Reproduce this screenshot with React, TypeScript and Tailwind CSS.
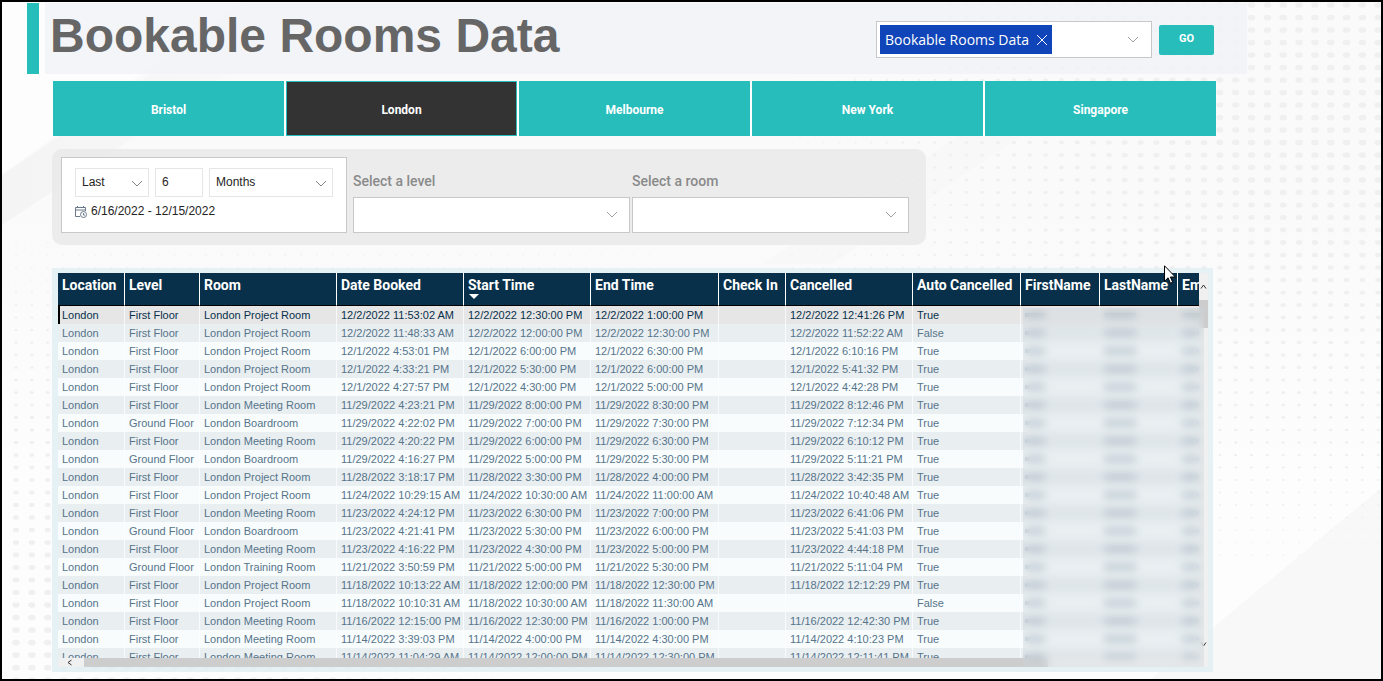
import clsx from "clsx";
import type { ReactNode } from "react";

const cities = ["Bristol", "London", "Melbourne", "New York", "Singapore"];

const columns = [
  { title: "Location", width: "w-[67px]" },
  { title: "Level", width: "w-[75px]" },
  { title: "Room", width: "w-[137px]" },
  { title: "Date Booked", width: "w-[127px]" },
  { title: "Start Time", width: "w-[127px]", sorted: true },
  { title: "End Time", width: "w-[128px]" },
  { title: "Check In", width: "w-[67px]" },
  { title: "Cancelled", width: "w-[127px]" },
  { title: "Auto Cancelled", width: "w-[108px]" },
  { title: "FirstName", width: "w-[79px]" },
  { title: "LastName", width: "w-[78px]" },
  { title: "Email", width: "w-[120px]" },
];

// level, room, booked, start, end, cancelled, auto cancelled
const bookings = [
  ["First Floor", "London Project Room", "12/2/2022 11:53:02 AM", "12/2/2022 12:30:00 PM", "12/2/2022 1:00:00 PM", "12/2/2022 12:41:26 PM", "True"],
  ["First Floor", "London Project Room", "12/2/2022 11:48:33 AM", "12/2/2022 12:00:00 PM", "12/2/2022 12:30:00 PM", "12/2/2022 11:52:22 AM", "False"],
  ["First Floor", "London Project Room", "12/1/2022 4:53:01 PM", "12/1/2022 6:00:00 PM", "12/1/2022 6:30:00 PM", "12/1/2022 6:10:16 PM", "True"],
  ["First Floor", "London Project Room", "12/1/2022 4:33:21 PM", "12/1/2022 5:30:00 PM", "12/1/2022 6:00:00 PM", "12/1/2022 5:41:32 PM", "True"],
  ["First Floor", "London Project Room", "12/1/2022 4:27:57 PM", "12/1/2022 4:30:00 PM", "12/1/2022 5:00:00 PM", "12/1/2022 4:42:28 PM", "True"],
  ["First Floor", "London Meeting Room", "11/29/2022 4:23:21 PM", "11/29/2022 8:00:00 PM", "11/29/2022 8:30:00 PM", "11/29/2022 8:12:46 PM", "True"],
  ["Ground Floor", "London Boardroom", "11/29/2022 4:22:02 PM", "11/29/2022 7:00:00 PM", "11/29/2022 7:30:00 PM", "11/29/2022 7:12:34 PM", "True"],
  ["First Floor", "London Meeting Room", "11/29/2022 4:20:22 PM", "11/29/2022 6:00:00 PM", "11/29/2022 6:30:00 PM", "11/29/2022 6:10:12 PM", "True"],
  ["Ground Floor", "London Boardroom", "11/29/2022 4:16:27 PM", "11/29/2022 5:00:00 PM", "11/29/2022 5:30:00 PM", "11/29/2022 5:11:21 PM", "True"],
  ["First Floor", "London Project Room", "11/28/2022 3:18:17 PM", "11/28/2022 3:30:00 PM", "11/28/2022 4:00:00 PM", "11/28/2022 3:42:35 PM", "True"],
  ["First Floor", "London Project Room", "11/24/2022 10:29:15 AM", "11/24/2022 10:30:00 AM", "11/24/2022 11:00:00 AM", "11/24/2022 10:40:48 AM", "True"],
  ["First Floor", "London Meeting Room", "11/23/2022 4:24:12 PM", "11/23/2022 6:30:00 PM", "11/23/2022 7:00:00 PM", "11/23/2022 6:41:06 PM", "True"],
  ["Ground Floor", "London Boardroom", "11/23/2022 4:21:41 PM", "11/23/2022 5:30:00 PM", "11/23/2022 6:00:00 PM", "11/23/2022 5:41:03 PM", "True"],
  ["First Floor", "London Meeting Room", "11/23/2022 4:16:22 PM", "11/23/2022 4:30:00 PM", "11/23/2022 5:00:00 PM", "11/23/2022 4:44:18 PM", "True"],
  ["Ground Floor", "London Training Room", "11/21/2022 3:50:59 PM", "11/21/2022 5:00:00 PM", "11/21/2022 5:30:00 PM", "11/21/2022 5:11:04 PM", "True"],
  ["First Floor", "London Project Room", "11/18/2022 10:13:22 AM", "11/18/2022 12:00:00 PM", "11/18/2022 12:30:00 PM", "11/18/2022 12:12:29 PM", "True"],
  ["First Floor", "London Project Room", "11/18/2022 10:10:31 AM", "11/18/2022 10:30:00 AM", "11/18/2022 11:30:00 AM", "", "False"],
  ["First Floor", "London Meeting Room", "11/16/2022 12:15:00 PM", "11/16/2022 12:30:00 PM", "11/16/2022 1:00:00 PM", "11/16/2022 12:42:30 PM", "True"],
  ["First Floor", "London Meeting Room", "11/14/2022 3:39:03 PM", "11/14/2022 4:00:00 PM", "11/14/2022 4:30:00 PM", "11/14/2022 4:10:23 PM", "True"],
  ["First Floor", "London Meeting Room", "11/14/2022 11:04:29 AM", "11/14/2022 12:00:00 PM", "11/14/2022 12:30:00 PM", "11/14/2022 12:11:41 PM", "True"],
];

function Chevron({ className }: { className?: string }) {
  return (
    <svg
      viewBox="0 0 12 8"
      className={clsx("pointer-events-none h-2 w-3 shrink-0", className)}
      fill="none"
      stroke="currentColor"
      aria-hidden="true"
    >
      <path d="M1 1l5 5 5-5" />
    </svg>
  );
}

// Halftone dots: big at the top right and bottom left, shrinking towards the middle
const dots: { x: number; y: number; r: number }[] = [];
for (let col = 0; col < 88; col++) {
  for (let row = 0; row < 55; row++) {
    const x = 14 + col * 15.84;
    const y = 3 + row * 12.5;
    const right = Math.min(1, (x - 780) / 480) * Math.min(1, (560 - y) / 400);
    const left = Math.min(1, (y - 230) / 400) * Math.min(1, (650 - x) / 400);
    const inRight = x > 780 && y < 560;
    const inLeft = x < 650 && y > 230;
    const size = inRight ? right : inLeft ? left : 0;
    if (size > 0) {
      dots.push({ x, y, r: 0.8 + size * 3 });
    }
  }
}

function Backdrop() {
  return (
    <svg
      className="absolute inset-0 size-full"
      viewBox="0 0 1379 677"
      preserveAspectRatio="xMidYMid slice"
      aria-hidden="true"
    >
      <defs>
        <linearGradient id="base" x2="0" y2="1">
          <stop offset="0" stopColor="#fafafa" />
          <stop offset="0.3" stopColor="#fafafa" />
          <stop offset="0.7" stopColor="#fdfdfd" />
        </linearGradient>
        <linearGradient id="band" x2="1" y2="0">
          <stop offset="0" stopColor="#f4f4f4" />
          <stop offset="1" stopColor="#fafafa" />
        </linearGradient>
      </defs>
      <rect width="1379" height="677" fill="url(#base)" />
      <path d="M0 0h240L0 172z" fill="#fdfdfd" />
      <path d="M0 173L240 10h80L0 223z" fill="url(#band)" />
      <path d="M760 262L1010 100h60L830 262z" fill="#f8f8f8" />
      <path d="M1379 486v191h-230z" fill="#f8f8f8" />
      {dots.map(({ x, y, r }) => (
        <ellipse key={`${x}-${y}`} cx={x} cy={y} rx={r} ry={r * 0.75} fill="#f0f0f0" />
      ))}
    </svg>
  );
}

function CalendarClock() {
  return (
    <svg viewBox="0 0 12 12" className="mt-0.5 size-3 shrink-0" fill="none" stroke="#6b788a" aria-hidden="true">
      <path d="M5 10.500H.5v-9h10V5M.5 4h10M2.500 0v2M8.500 0v2" />
      <circle cx="8.500" cy="8.500" r="3" fill="#fff" />
      <path d="M8.500 7v2H10" />
    </svg>
  );
}

interface SlicerSelectProps {
  label: string;
  id: string;
}

function SlicerSelect({ label, id }: SlicerSelectProps) {
  return (
    <div className="flex w-[277px] flex-col justify-between">
      <label
        htmlFor={id}
        className="pt-4 font-['Roboto',sans-serif] text-sm/4 font-medium text-[#8a8a8a]"
      >
        {label}
      </label>
      <div className="relative">
        <select
          id={id}
          className="block h-9 w-full appearance-none border border-[#c8c8c8] bg-white px-3 text-xs"
        >
          <option value="" />
        </select>
        <Chevron className="absolute top-3.5 right-3 text-[#a0a0a0]" />
      </div>
    </div>
  );
}

interface PeriodSelectProps {
  label: string;
  width: string;
  options: string[];
}

function PeriodSelect({ label, width, options }: PeriodSelectProps) {
  return (
    <div className={clsx("relative", width)}>
      <select
        aria-label={label}
        className="block h-[29px] w-full appearance-none border border-[#e6e6e6] bg-white pb-px pl-1.5 text-xs text-[#252423]"
      >
        {options.map((option) => (
          <option key={option}>{option}</option>
        ))}
      </select>
      <Chevron className="absolute top-3 right-1.5 text-[#858585]" />
    </div>
  );
}

function Header() {
  return (
    <header className="flex h-[71px] gap-1.5 pr-[134px] pl-[25px]">
      <div className="w-3 shrink-0 bg-[#27bdbb]" />
      <div className="flex flex-1 items-start justify-between bg-[#f0f3f8]/80 pr-[33px] pl-[5px]">
        <h1 className="text-5xl/[66px] font-bold whitespace-nowrap text-[#666]">
          Bookable Rooms Data
        </h1>
        <div className="flex items-center gap-[7px] pt-[18px]">
          <div
            role="combobox"
            aria-label="Report page"
            aria-expanded="false"
            aria-controls="pages"
            className="flex h-[37px] w-[276px] items-center justify-between border border-[#c8c8c8] bg-white pr-3 pl-[3px]"
          >
            <span className="flex h-[29px] items-center gap-2 bg-[#0f45b8] px-[5px] font-['Open_Sans',sans-serif] text-sm whitespace-nowrap text-white">
              Bookable Rooms Data
              <button type="button" aria-label="Remove Bookable Rooms Data">
                <svg viewBox="0 0 10 10" className="size-2.5" stroke="currentColor" aria-hidden="true">
                  <path d="M0 0l10 10M10 0L0 10" />
                </svg>
              </button>
            </span>
            <Chevron className="text-[#a0a0a0]" />
          </div>
          <button
            type="button"
            className="h-[30px] w-[55px] rounded-[2px] bg-[#27bdbb] font-['Roboto',sans-serif] text-[11px] font-bold text-white"
          >
            GO
          </button>
        </div>
      </div>
    </header>
  );
}

function CityTabs() {
  return (
    <nav className="mt-[7px] mr-[165px] ml-[51px] grid grid-cols-5 gap-0.5 bg-white">
      {cities.map((city) => (
        <button
          key={city}
          type="button"
          aria-pressed={city === "London"}
          className={clsx(
            "h-[55px] border border-[#27bdbb] pt-0.5 font-['Roboto',sans-serif] text-xs font-bold text-white",
            city === "London" ? "bg-[#333]" : "bg-[#27bdbb]",
          )}
        >
          {city}
        </button>
      ))}
    </nav>
  );
}

function Filters() {
  return (
    <section className="mt-[13px] ml-[50px] flex w-[874px] rounded-[10px] bg-[#e8e8e8]/80 pt-2 pb-3 pl-[9px]">
      <div className="mr-1.5 h-[76px] w-[286px] border border-[#c8c8c8] bg-white px-[13px] pt-2.5">
        <div className="flex gap-1.5">
          <PeriodSelect label="Direction" width="w-[74px]" options={["Last", "Next", "This"]} />
          <input
            aria-label="Amount"
            defaultValue="6"
            className="h-[29px] w-12 border border-[#e6e6e6] pb-px pl-1.5 text-xs text-[#252423]"
          />
          <PeriodSelect label="Unit" width="w-[124px]" options={["Months", "Days", "Weeks", "Years"]} />
        </div>
        <p className="mt-1.5 flex items-center gap-1 text-xs/4 text-[#252423]">
          <CalendarClock />
          6/16/2022 - 12/15/2022
        </p>
      </div>
      <div className="flex gap-0.5">
        <SlicerSelect id="level" label="Select a level" />
        <SlicerSelect id="room" label="Select a room" />
      </div>
    </section>
  );
}

function Cell({ children, className }: { children?: ReactNode; className?: string }) {
  return (
    <td className={clsx("h-[18px] border-r border-white/70 p-0 pl-1", className)}>{children}</td>
  );
}

function BookingsTable() {
  return (
    <table className="w-[1240px] table-fixed border-separate border-spacing-0 text-left">
      <thead>
        <tr>
          {columns.map(({ title, width, sorted }) => (
            <th
              key={title}
              scope="col"
              aria-sort={sorted ? "descending" : undefined}
              className={clsx(
                "h-[33px] border-r border-b border-r-white border-b-black bg-[#08304b] p-0 pt-[3px] pl-1 align-top font-['Roboto',sans-serif] text-sm/[18px] font-bold text-white",
                width,
              )}
            >
              {title}
              {sorted && (
                <svg viewBox="0 0 12 6" className="block h-1.5 w-3" fill="#fff" aria-hidden="true">
                  <path d="M1 0h10L6 5z" />
                </svg>
              )}
            </th>
          ))}
        </tr>
      </thead>
      <tbody className="text-[11px]/[18px] whitespace-nowrap">
        {bookings.map(([level, room, booked, start, end, cancelled, auto], i) => (
          <tr
            key={booked}
            className={clsx(
              i === 0 && "bg-[#e6e6e6] text-[#08304b]",
              i > 0 && "text-[#56748a]",
              i > 0 && (i % 2 ? "bg-[#e9eef1]" : "bg-[#f8fcfd]"),
            )}
          >
            <Cell className={i === 0 ? "shadow-[inset_2px_0_0_#000]" : undefined}>London</Cell>
            <Cell>{level}</Cell>
            <Cell>{room}</Cell>
            <Cell>{booked}</Cell>
            <Cell>{start}</Cell>
            <Cell>{end}</Cell>
            <Cell />
            <Cell>{cancelled}</Cell>
            <Cell>{auto}</Cell>
            <Cell>
              <div className="h-1 w-5 bg-[#92a4b2]" />
            </Cell>
            <Cell>
              <div className="h-1 w-8 bg-[#92a4b2]" />
            </Cell>
            <Cell>
              <div className="h-1 w-5 bg-[#92a4b2]" />
            </Cell>
          </tr>
        ))}
      </tbody>
    </table>
  );
}

function BookingsPanel() {
  return (
    <section className="mt-[23px] mr-[168px] ml-[50px] bg-[#e2eef5]/85 py-[5px] pr-[5px] pl-1.5">
      <div className="relative">
        <div className="flex h-[385px]">
          <div className="min-w-0 flex-1 overflow-hidden">
            <BookingsTable />
          </div>
          <div className="flex w-[9px] shrink-0 flex-col bg-[#f0f0f0]">
            <button type="button" aria-label="Scroll up" className="flex h-[27px] items-center justify-center">
              <svg viewBox="0 0 7 5" className="h-[5px] w-[7px]" fill="none" stroke="#333" aria-hidden="true">
                <path d="M1 4.500L3.500 1 6 4.500" />
              </svg>
            </button>
            <div className="h-7 bg-[#cdcdcd]" />
            <button type="button" aria-label="Scroll down" className="mt-auto flex h-[27px] items-center justify-center">
              <svg viewBox="0 0 7 5" className="h-[5px] w-[7px]" fill="none" stroke="#333" aria-hidden="true">
                <path d="M1 .5L3.500 4 6 .5" />
              </svg>
            </button>
          </div>
        </div>
        <div className="flex h-[9px] bg-[#f0f0f0]">
          <button type="button" aria-label="Scroll left" className="flex w-[26px] items-center justify-center pr-1">
            <svg viewBox="0 0 5 7" className="h-[7px] w-[5px]" fill="none" stroke="#333" aria-hidden="true">
              <path d="M4.500 1L1 3.500 4.500 6" />
            </svg>
          </button>
          <div className="mr-[160px] flex-1 bg-[#cdcdcd]" />
        </div>
        {/* hides the personal columns */}
        <div className="absolute top-[35px] right-1 bottom-0 w-[181px] bg-[#cfd6dc]/35 backdrop-blur-[4px]" />
      </div>
    </section>
  );
}

function Pointer() {
  return (
    <svg viewBox="0 0 12 19" className="absolute top-[263px] left-[1162px] h-[19px] w-3" aria-hidden="true">
      <path d="M.5.8v15.500l3.600-3.500 2.300 5.400 2.300-1-2.300-5.200h5z" fill="#fff" stroke="#000" />
    </svg>
  );
}

export default function App() {
  return (
    <main className="relative min-h-screen overflow-hidden border-2 border-black font-['Liberation_Sans',Arial,sans-serif]">
      <Backdrop />
      <div className="relative pt-px pb-[7px]">
        <Header />
        <CityTabs />
        <Filters />
        <BookingsPanel />
      </div>
      <Pointer />
    </main>
  );
}
